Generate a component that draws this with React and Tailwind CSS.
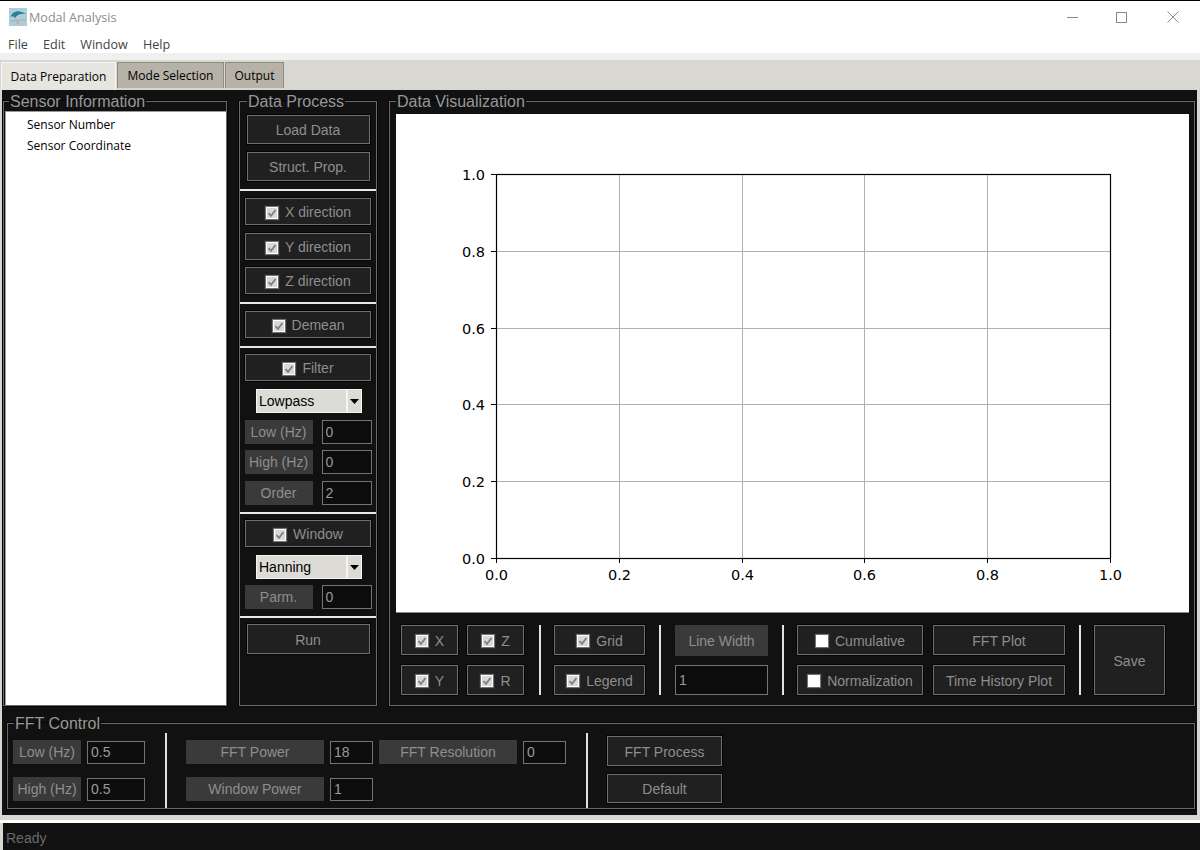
const ui = { fontFamily: '"Liberation Sans", Arial, sans-serif' };

const Check = ({ checked = true }) => (
  <span className="w-[14px] h-[14px] shrink-0 bg-white border border-[#6f6f6f] shadow-[0_0_0_1px_#2a2a2a] flex items-center justify-center">
    {checked && (
      <svg width="10" height="10" viewBox="0 0 10 10" className="bg-[#d8d8d8]">
        <path d="M1.5 5.2 L4 7.8 L8.5 2" fill="none" stroke="#808080" strokeWidth="1.8" />
      </svg>
    )}
  </span>
);

const Btn = ({ className = "", children }) => (
  <button className={`flex items-center justify-center pt-[2px] bg-[#202020] border border-[#6e6e6e] shadow-[0_0_0_1px_#050505] text-[14px] text-[#8e8e8e] ${className}`}>
    {children}
  </button>
);

const CheckBtn = ({ label, checked, className = "", gap = "gap-[6px]" }) => (
  <Btn className={`${gap} ${className}`}>
    <Check checked={checked} />
    <span>{label}</span>
  </Btn>
);

const Label = ({ className = "", children }) => (
  <div className={`h-6 flex items-center justify-center bg-[#3a3a3a] text-[14px] text-[#8e8e8e] shrink-0 ${className}`}>
    {children}
  </div>
);

const Field = ({ value, className = "" }) => (
  <input
    readOnly
    value={value}
    className={`bg-[#0c0c0c] border border-[#747474] pl-[3px] text-[14px] text-[#9a9a9a] outline-none shrink-0 ${className}`}
  />
);

const Combo = ({ value, className = "" }) => (
  <div className={`w-[106px] h-6 flex bg-[#dcdbd6] border border-[#f4f4f0] text-[14px] text-black ${className}`}>
    <span className="flex-1 pl-[2px] flex items-center">{value}</span>
    <span className="w-[15px] border-l-2 border-[#f4f4f0] flex items-center justify-center">
      <svg width="9" height="5" viewBox="0 0 9 5"><path d="M0 0h9L4.5 5z" fill="#000" /></svg>
    </span>
  </div>
);

const Sep = ({ className = "" }) => <div className={`h-[2px] self-stretch bg-[#e8e8e8] ${className}`} />;
const VSep = ({ className = "" }) => <div className={`w-[2px] self-stretch bg-[#e0e0e0] shrink-0 ${className}`} />;

const Group = ({ title, className = "", legend = "ml-[6px]", children }) => (
  <fieldset className={`border border-[#6a6a6a] shadow-[0_0_0_1px_#050505] min-w-0 ${className}`}>
    <legend className={`${legend} px-px h-[18px] leading-[20px] text-[16px] text-[#989898]`}>{title}</legend>
    {children}
  </fieldset>
);

const Chart = () => {
  const ticks = [0, 0.2, 0.4, 0.6, 0.8, 1];
  const left = 100;
  const top = 60;
  const w = 614;
  const h = 384;
  return (
    <svg width="793" height="498" className="bg-white block" style={{ fontFamily: '"DejaVu Sans", sans-serif' }}>
      {ticks.map((t) => {
        const x = Math.round(left + t * w) + 0.5;
        const y = Math.round(top + h - t * h) + 0.5;
        return (
          <g key={t}>
            <line x1={x} y1={top} x2={x} y2={top + h} stroke="#b0b0b0" />
            <line x1={left} y1={y} x2={left + w} y2={y} stroke="#b0b0b0" />
            <line x1={x} y1={top + h} x2={x} y2={top + h + 5} stroke="#000" />
            <line x1={left - 5} y1={y} x2={left} y2={y} stroke="#000" />
            <text x={x} y={top + h + 22} textAnchor="middle" fontSize="14.5" fill="#000">{t.toFixed(1)}</text>
            <text x={left - 11} y={y + 5} textAnchor="end" fontSize="14.5" fill="#000">{t.toFixed(1)}</text>
          </g>
        );
      })}
      <rect x={left + 0.5} y={top + 0.5} width={w} height={h} fill="none" stroke="#000" strokeWidth="1.2" />
    </svg>
  );
};

const DataProcess = () => (
  <Group title="Data Process" legend="ml-[7px]" className="w-[138px] h-[614px] flex flex-col items-center shrink-0 ml-[12px]">
    <Btn className="w-[123px] h-[29px] mt-[5px]">Load Data</Btn>
    <Btn className="w-[123px] h-[29px] mt-2">Struct. Prop.</Btn>
    <Sep className="mt-2" />
    <CheckBtn label="X direction" className="w-[126px] h-[27px] mt-[7px]" />
    <CheckBtn label="Y direction" className="w-[126px] h-[27px] mt-2" />
    <CheckBtn label="Z direction" className="w-[126px] h-[27px] mt-[7px]" />
    <Sep className="mt-2" />
    <CheckBtn label="Demean" className="w-[126px] h-[27px] mt-[7px]" />
    <Sep className="mt-2" />
    <CheckBtn label="Filter" className="w-[126px] h-[27px] mt-1.5" />
    <Combo value="Lowpass" className="mt-2 ml-[2px]" />
    <div className="flex w-[127px] justify-between mt-[7px]">
      <Label className="w-[68px]">Low (Hz)</Label>
      <Field value="0" className="w-[50px] h-6" />
    </div>
    <div className="flex w-[127px] justify-between mt-1.5">
      <Label className="w-[68px]">High (Hz)</Label>
      <Field value="0" className="w-[50px] h-6" />
    </div>
    <div className="flex w-[127px] justify-between mt-[7px]">
      <Label className="w-[68px]">Order</Label>
      <Field value="2" className="w-[50px] h-6" />
    </div>
    <Sep className="mt-[7px]" />
    <CheckBtn label="Window" className="w-[126px] h-[27px] mt-1.5" />
    <Combo value="Hanning" className="mt-2 ml-[2px]" />
    <div className="flex w-[127px] justify-between mt-1.5">
      <Label className="w-[68px]">Parm.</Label>
      <Field value="0" className="w-[50px] h-6" />
    </div>
    <Sep className="mt-[7px]" />
    <Btn className="w-[123px] h-[30px] mt-1.5">Run</Btn>
  </Group>
);

const DataViz = () => (
  <Group title="Data Visualization" className="flex-1 h-[614px] ml-[12px] mr-[2px]">
    <div className="mt-1 ml-[6px] border-b border-[#888] w-[793px]">
      <Chart />
    </div>
    <div className="flex h-[70px] mt-3 ml-[11px]">
      <div className="grid grid-cols-[57px_57px] grid-rows-[30px_30px] gap-x-[9px] gap-y-[10px]">
        <CheckBtn label="X" />
        <CheckBtn label="Z" />
        <CheckBtn label="Y" />
        <CheckBtn label="R" />
      </div>
      <VSep className="ml-[15px]" />
      <div className="ml-[13px] w-[91px] grid grid-rows-[30px_30px] gap-y-[10px]">
        <CheckBtn label="Grid" />
        <CheckBtn label="Legend" />
      </div>
      <VSep className="ml-[14px]" />
      <div className="ml-[14px] w-[93px] flex flex-col justify-between">
        <Label className="h-[31px] w-full pt-[2px]">Line Width</Label>
        <Field value="1" className="h-[30px] w-full" />
      </div>
      <VSep className="ml-[14px]" />
      <div className="ml-[13px] grid grid-cols-[126px_132px] grid-rows-[30px_30px] gap-x-[10px] gap-y-[10px]">
        <CheckBtn label="Cumulative" checked={false} />
        <Btn>FFT Plot</Btn>
        <CheckBtn label="Normalization" checked={false} />
        <Btn>Time History Plot</Btn>
      </div>
      <VSep className="ml-[14px]" />
      <Btn className="ml-[13px] w-[71px] h-[70px]">Save</Btn>
    </div>
  </Group>
);

const FftControl = () => (
  <Group title="FFT Control" className="mt-2 ml-[5px] mr-[2px] h-[95px]">
    <div className="flex h-[76px] pt-px">
      <div className="ml-[5px] mt-[7px] flex flex-col gap-[13px] w-[132px]">
        <div className="flex gap-1.5 items-center">
          <Label className="w-[68px]">Low (Hz)</Label>
          <Field value="0.5" className="w-[58px] h-[23px]" />
        </div>
        <div className="flex gap-1.5 items-center">
          <Label className="w-[68px]">High (Hz)</Label>
          <Field value="0.5" className="w-[58px] h-[23px]" />
        </div>
      </div>
      <VSep className="ml-5" />
      <div className="ml-[19px] mt-[7px] flex flex-col gap-[13px] w-[380px]">
        <div className="flex gap-1.5 items-center">
          <Label className="w-[138px]">FFT Power</Label>
          <Field value="18" className="w-[43px] h-[23px]" />
          <Label className="w-[138px]">FFT Resolution</Label>
          <Field value="0" className="w-[43px] h-[23px]" />
        </div>
        <div className="flex gap-1.5 items-center">
          <Label className="w-[138px]">Window Power</Label>
          <Field value="1" className="w-[43px] h-[23px]" />
        </div>
      </div>
      <VSep className="ml-5" />
      <div className="ml-[19px] mt-[3px] flex flex-col gap-2 w-[115px]">
        <Btn className="h-[30px]">FFT Process</Btn>
        <Btn className="h-[29px]">Default</Btn>
      </div>
    </div>
  </Group>
);

const App = () => (
  <div className="w-[1200px] h-[850px] overflow-hidden flex flex-col bg-[#d8d7d2]" style={ui}>
    <div className="h-px bg-black shrink-0" />
    {/* title + menu */}
    <div className="h-[32px] bg-white flex items-center shrink-0 pr-[21px]" style={{ fontFamily: '"Open Sans", sans-serif' }}>
      <svg width="18" height="18" viewBox="0 0 18 18" className="ml-[9px]">
        <rect width="18" height="18" fill="#a9cfd8" />
        <path d="M1 9 C4 3 9 1 17 6 C11 5 8 7 6 10 C4 8 3 8 1 9Z" fill="#2f7f94" />
        <path d="M1 13h5l1-2 1.5 5 1.5-4h7" fill="none" stroke="#d98a8a" strokeWidth="0.8" />
      </svg>
      <span className="ml-[2px] pt-[2px] text-[12.6px] text-[#8c8c8c]">Modal Analysis</span>
      <div className="ml-auto flex items-center">
        <svg width="11" height="11" viewBox="0 0 11 11"><path d="M0 5.5h11" stroke="#888" /></svg>
        <svg width="11" height="11" viewBox="0 0 11 11" className="ml-[38px]"><rect x=".5" y=".5" width="10" height="10" fill="none" stroke="#888" /></svg>
        <svg width="12" height="12" viewBox="0 0 12 12" className="ml-[40px]"><path d="M.5.5l11 11M11.5.5l-11 11" stroke="#888" /></svg>
      </div>
    </div>
    <div className="h-[20px] bg-white flex items-center shrink-0 pl-2 pt-1 gap-[15px] text-[12.6px] text-[#444]" style={{ fontFamily: '"Open Sans", sans-serif' }}>
      <span>File</span>
      <span>Edit</span>
      <span>Window</span>
      <span>Help</span>
    </div>
    <div className="h-[7px] bg-[#f0f0f0] shrink-0" />
    {/* tabs */}
    <div className="h-[30px] flex items-end pl-px gap-px text-[12px] text-black shrink-0" style={{ fontFamily: '"Open Sans", sans-serif' }}>
      <div className="w-[115px] h-[28px] bg-[#e6e5e0] border border-b-0 border-[#f5f5f2] flex items-center justify-center">Data Preparation</div>
      <div className="w-[107px] h-[26px] mb-[2px] bg-[#b6b2a7] border border-b-0 border-[#8f8c82] flex items-center justify-center">Mode Selection</div>
      <div className="w-[59px] h-[26px] mb-[2px] bg-[#b6b2a7] border border-b-0 border-[#8f8c82] flex items-center justify-center">Output</div>
    </div>
    {/* main area */}
    <div className="h-[725px] ml-[2px] mr-[3px] bg-[#111111] pt-[2px] shrink-0">
      <div className="flex">
        <Group title="Sensor Information" legend="ml-[5px]" className="w-[224px] h-[614px] ml-px shrink-0">
          <div className="ml-px h-[594px] mt-px bg-white border-t border-l border-[#999] pt-px pl-[21px] text-[12px] text-black" style={{ fontFamily: '"Open Sans", sans-serif' }}>
            <div className="h-[22px] pt-px flex items-center">Sensor Number</div>
            <div className="h-[22px] flex items-center">Sensor Coordinate</div>
          </div>
        </Group>
        <DataProcess />
        <DataViz />
      </div>
      <FftControl />
    </div>
    <div className="h-[5px] shrink-0" />
    <div className="h-[3px] bg-white shrink-0" />
    <div className="flex-1 ml-[3px] bg-[#111111] pl-[3px] pt-1 flex items-center text-[14px] text-[#6a6a6a]">Ready</div>
  </div>
);

export default App;
